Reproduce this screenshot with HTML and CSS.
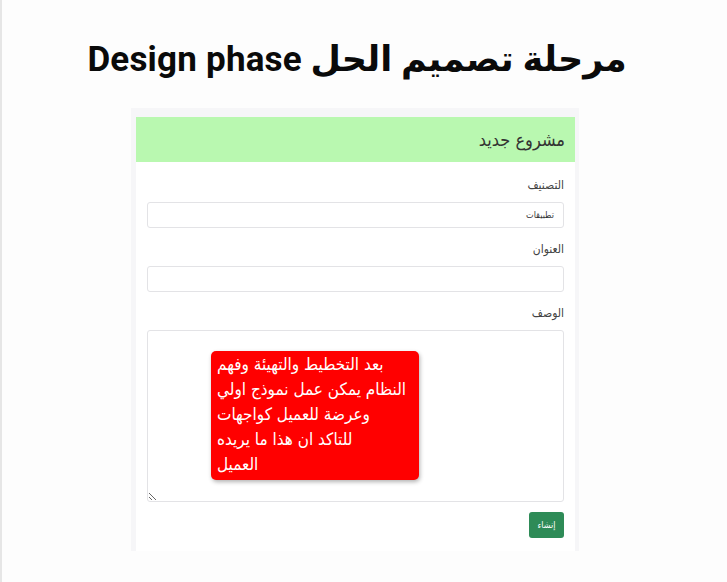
FILE: index.html
```html
<!DOCTYPE html>
<html lang="ar" dir="rtl">
<head>
<meta charset="utf-8">
<title>Design phase</title>
<link rel="stylesheet" href="styles.css">
</head>
<body>
<main class="page">
  <h1 class="title">مرحلة تصميم الحل Design phase</h1>
  <section class="panel">
    <div class="card">
      <header class="card-head">مشروع جديد</header>
      <form class="card-body">
        <label class="label">التصنيف</label>
        <div class="input"><span class="val">تطبيقات</span></div>
        <label class="label">العنوان</label>
        <div class="input"></div>
        <label class="label">الوصف</label>
        <div class="area-wrap">
          <textarea class="area"></textarea>
          <div class="note"><span class="line">بعد التخطيط والتهيئة وفهم</span><span class="line">النظام يمكن عمل نموذج اولي</span><span class="line">وعرضة للعميل كواجهات</span><span class="line">للتاكد ان هذا ما يريده</span><span class="line">العميل</span></div>
        </div>
        <div class="actions"><button type="button" class="btn">إنشاء</button></div>
      </form>
    </div>
  </section>
</main>
</body>
</html>
```

FILE: styles.css
```css
html, body {
  margin: 0;
  padding: 0;
}
body {
  background: #fdfdfd;
  border-left: 2px solid #e6e6e6;
  min-height: 582px;
  box-sizing: border-box;
  font-family: "DejaVu Sans", "Liberation Sans", sans-serif;
}
.page {
  width: 710px;
  margin-left: 0;
  margin-right: auto;
  display: flex;
  flex-direction: column;
  align-items: center;
}
.title {
  margin: 39px 0 0;
  font-family: "Roboto", "DejaVu Sans", sans-serif;
  font-weight: 700;
  font-size: 35px;
  line-height: 42px;
  color: #0a0a0a;
  letter-spacing: 0.2px;
}
.panel {
  margin-top: 27px;
  margin-right: 4px;
  width: 448px;
  box-sizing: border-box;
  padding: 9px 4px 0 5px;
  background: #f6f6f8;
  height: 443px;
  display: flex;
}
.card {
  flex: 1;
  background: #fff;
  display: flex;
  flex-direction: column;
}
.card-head {
  height: 45px;
  background: #b9f8b0;
  display: flex;
  align-items: center;
  padding: 0 10px;
  font-family: "DejaVu Sans Condensed", "DejaVu Sans", sans-serif;
  font-size: 18px;
  color: #333;
}
.card-body {
  display: flex;
  flex-direction: column;
  padding: 14px 11px 0;
}
.label {
  font-family: "DejaVu Sans Condensed", "DejaVu Sans", sans-serif;
  font-size: 12px;
  line-height: 18px;
  color: #444;
  margin-bottom: 8px;
}
.input {
  height: 26px;
  border: 1px solid #e3e3e6;
  border-radius: 3px;
  box-sizing: border-box;
  display: flex;
  align-items: center;
  padding: 0 9px;
  margin-bottom: 12px;
  background: #fff;
}
.val {
  font-family: "DejaVu Sans Condensed", "DejaVu Sans", sans-serif;
  font-size: 9px;
  color: #333;
}
.area-wrap {
  position: relative;
  height: 172px;
}
.area {
  width: 100%;
  height: 172px;
  box-sizing: border-box;
  border: 1px solid #e3e3e6;
  border-radius: 3px;
  margin: 0;
  display: block;
  background: #fff;
}
.note {
  position: absolute;
  top: 21px;
  left: 64px;
  width: 208px;
  height: 129px;
  box-sizing: border-box;
  background: #ff0000;
  border-radius: 5px;
  box-shadow: 1px 2px 4px rgba(0,0,0,0.3);
  direction: ltr;
  text-align: left;
  color: #fff;
  font-family: "DejaVu Sans Condensed", "DejaVu Sans", sans-serif;
  font-size: 17px;
  line-height: 25px;
  padding: 1px 6px;
  display: flex;
  flex-direction: column;
  align-items: flex-start;
}
.line {
  white-space: nowrap;
  direction: rtl;
}
.actions {
  display: flex;
  margin-top: 10px;
}
.btn {
  width: 35px;
  height: 26px;
  border: none;
  border-radius: 3px;
  background: #2e8b57;
  color: #fff;
  font-family: "DejaVu Sans Condensed", "DejaVu Sans", sans-serif;
  font-size: 9px;
  padding: 0;
}
```
